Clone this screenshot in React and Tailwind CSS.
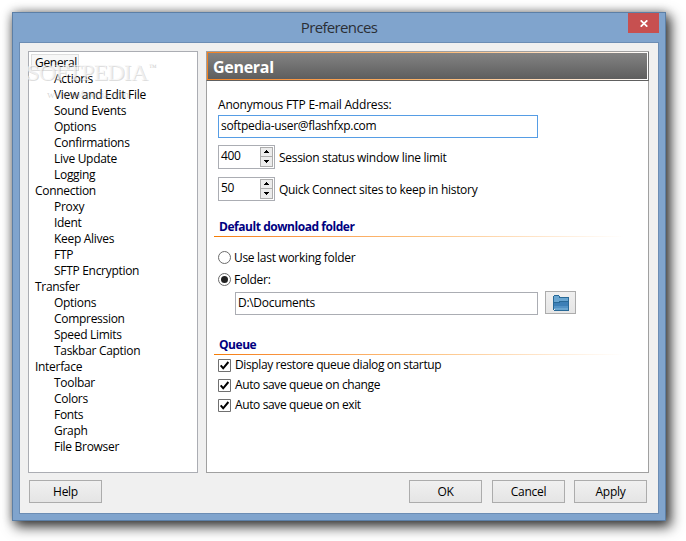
const tree = [
  { name: 'General', children: ['Actions', 'View and Edit File', 'Sound Events', 'Options', 'Confirmations', 'Live Update', 'Logging'] },
  { name: 'Connection', children: ['Proxy', 'Ident', 'Keep Alives', 'FTP', 'SFTP Encryption'] },
  { name: 'Transfer', children: ['Options', 'Compression', 'Speed Limits', 'Taskbar Caption'] },
  { name: 'Interface', children: ['Toolbar', 'Colors', 'Fonts', 'Graph', 'File Browser'] },
];

function Button({ children, className = '' }) {
  return (
    <button
      className={`flex h-[23px] w-[73px] items-center justify-center border border-[#acacac] bg-linear-to-b from-[#f0f0f0] to-[#e5e5e5] ${className}`}
    >
      {children}
    </button>
  );
}

function Spinner({ value, label, className = '' }) {
  return (
    <div className={`flex h-6 items-center ${className}`}>
      <div className="flex h-6 w-[57px] justify-between border border-[#abadb3] bg-white p-px">
        <span className="pl-px leading-[18px]">{value}</span>
        <svg width="13" height="20" viewBox="0 0 13 20" shapeRendering="crispEdges">
          <path d="M.5.5h12v9H.5zM.5 9.5h12v10H.5z" fill="#ececec" stroke="#acacac" />
          <path d="M6 3h1v1H6zM5 4h3v1H5zM4 5h5v1H4zM4 13h5v1H4zM5 14h3v1H5zM6 15h1v1H6z" fill="#000" />
        </svg>
      </div>
      <span className="pt-0.5 pl-1">{label}</span>
    </div>
  );
}

function Section({ children }) {
  return (
    <div className="-ml-1 w-[410px]">
      <h2 className="h-5 pl-[5px] text-[12px] leading-[22px] font-bold tracking-[-0.45px] text-[#00007f]">{children}</h2>
      <div className="h-px bg-linear-to-r from-[#f57c00] via-[#fcc07c] to-white" />
    </div>
  );
}

function Radio({ checked, label }) {
  return (
    <div className="flex h-[22px] items-center">
      <svg width="13" height="13" viewBox="0 0 13 13">
        <circle cx="6.5" cy="6.5" r="6" fill="#fff" stroke="#6b6b6b" />
        {checked && <circle cx="6.5" cy="6.5" r="3.5" fill="#212121" />}
      </svg>
      <span className="pt-0.5 pl-[3px]">{label}</span>
    </div>
  );
}

function Check({ label }) {
  return (
    <div className="flex h-5 items-center">
      <svg width="13" height="13" viewBox="0 0 13 13">
        <path d="M.5.5h12v12H.5z" fill="#fff" stroke="#707070" />
        <path d="M2.7 6.3 5.2 9.3 10.4 3" fill="none" stroke="#000" strokeWidth="2" />
      </svg>
      <span className="pl-1 tracking-[-0.38px]">{label}</span>
    </div>
  );
}

export default function App() {
  return (
    <div className="h-[541px] w-[686px] overflow-hidden bg-white p-3 font-['Open_Sans',sans-serif] text-[12px] tracking-[-0.3px] text-black">
      <div className="flex h-[509px] w-[654px] flex-col border border-[#5c7fa6] bg-[#80a4cd] px-1.5 pb-1.5 shadow-[4px_5px_12px_1px_rgba(0,0,0,0.75),0_0_9px_rgba(0,0,0,0.3)]">
        <header className="flex h-[29px] items-start">
          <div className="w-[31px]" />
          <h1 className="flex-1 pt-[3px] text-center text-[15px] leading-[22px] tracking-[-0.65px] text-[#2b2f36]">Preferences</h1>
          <div className="flex h-5 w-[31px] items-center justify-center bg-[#c75050]">
            <svg width="8" height="7" viewBox="0 0 8 7">
              <path d="M.7.3 7.3 6.7M7.3.3.7 6.7" stroke="#fff" strokeWidth="1.7" />
            </svg>
          </div>
        </header>

        <div className="h-[472px] w-[640px] border border-[#6c8db4] bg-[#f0f0f0] px-2 pt-2">
          <div className="flex justify-between pr-px">
            <nav className="relative h-[422px] w-[170px] border border-[#abadb3] bg-white pt-0.5">
              {tree.map((group) => (
                <div key={group.name}>
                  <div className="flex h-4 items-center pl-0.5">
                    <span
                      className={
                        group.name === 'General'
                          ? 'flex h-[17px] w-12 items-center border border-[#dedede] bg-[#f7f7f7] pt-px pl-[3px]'
                          : 'pt-0.5 pl-1'
                      }
                    >
                      {group.name}
                    </span>
                  </div>
                  {group.children.map((item) => (
                    <div key={item} className="h-4 pl-[25px] leading-[18px]">
                      {item}
                    </div>
                  ))}
                </div>
              ))}
              <svg className="pointer-events-none absolute top-1 -left-1" width="135" height="46" viewBox="0 0 135 46">
                <g fontFamily="Liberation Serif, serif" letterSpacing="0">
                  <text x="2" y="25" fontSize="24" textLength="122" fill="#a8a8a8" fillOpacity="0.4">SOFTPEDIA</text>
                  <text x="1" y="24" fontSize="24" textLength="122" fill="#f6f6f6" fillOpacity="0.7">SOFTPEDIA</text>
                  <text x="124" y="14" fontSize="8" fill="#cfcfcf">™</text>
                  <text x="22" y="42" fontSize="11" textLength="82" fill="#b0b0b0" fillOpacity="0.45">www.softpedia.com</text>
                </g>
              </svg>
            </nav>

            <main className="h-[422px] w-[443px] border border-[#a0a0a0] bg-white">
              <div className="-mx-px flex h-[29px] border-x border-b border-b-[#606060] border-l-[#a0a0a0] border-r-[#707070] bg-linear-to-r from-[#f58220] via-[#fbb469] to-white p-px">
                <div className="flex-1 bg-linear-to-b from-[#838383] to-[#5e5e5e] pl-[5px] text-[16px] leading-[28px] font-bold tracking-[-0.3px] text-white">
                  General
                </div>
              </div>

              <div className="pt-[15px] pl-[11px]">
                <div className="h-[19px] leading-[18px] tracking-[-0.2px]">Anonymous FTP E-mail Address:</div>
                <div className="h-[23px] w-[320px] border border-[#569de5] pl-0.5 leading-5">softpedia-user@flashfxp.com</div>
                <Spinner value="400" label="Session status window line limit" className="mt-[7px]" />
                <Spinner value="50" label="Quick Connect sites to keep in history" className="mt-2" />

                <div className="pt-[15px]">
                  <Section>Default download folder</Section>
                </div>
                <div className="pt-[9px]">
                  <Radio label="Use last working folder" />
                  <Radio checked label="Folder:" />
                </div>
                <div className="mt-px flex pl-[17px]">
                  <div className="mt-px h-[23px] w-[303px] border border-[#abadb3] pl-0.5 leading-5">D:\Documents</div>
                  <button className="ml-[7px] flex h-[23px] w-[31px] items-center justify-center border border-[#acacac] bg-linear-to-b from-[#f0f0f0] to-[#e5e5e5]">
                    <svg width="16" height="16" viewBox="0 0 16 16" shapeRendering="crispEdges">
                      <path d="M1 1h5l1 2h8v12H2l-1-1z" fill="#69a5d0" />
                      <path d="M1 8h5l1-1h8v4H1z" fill="#3c7fb6" />
                      <path d="M1 11h14v2H1z" fill="#5292c5" />
                      <path d="M.5 1.5 1.5.5h4l1.5 2h8.500v13h-14l-1-1zM.5 7.500H6l1-1h8.500" fill="none" stroke="#286997" />
                    </svg>
                  </button>
                </div>

                <div className="pt-[19px]">
                  <Section>Queue</Section>
                </div>
                <Check label="Display restore queue dialog on startup" />
                <Check label="Auto save queue on change" />
                <Check label="Auto save queue on exit" />
              </div>
            </main>
          </div>

          <footer className="flex pt-[7px] pl-px">
            <Button>Help</Button>
            <Button className="ml-[307px]">OK</Button>
            <Button className="ml-[10px]">Cancel</Button>
            <Button className="ml-[9px]">Apply</Button>
          </footer>
        </div>
      </div>
    </div>
  );
}
